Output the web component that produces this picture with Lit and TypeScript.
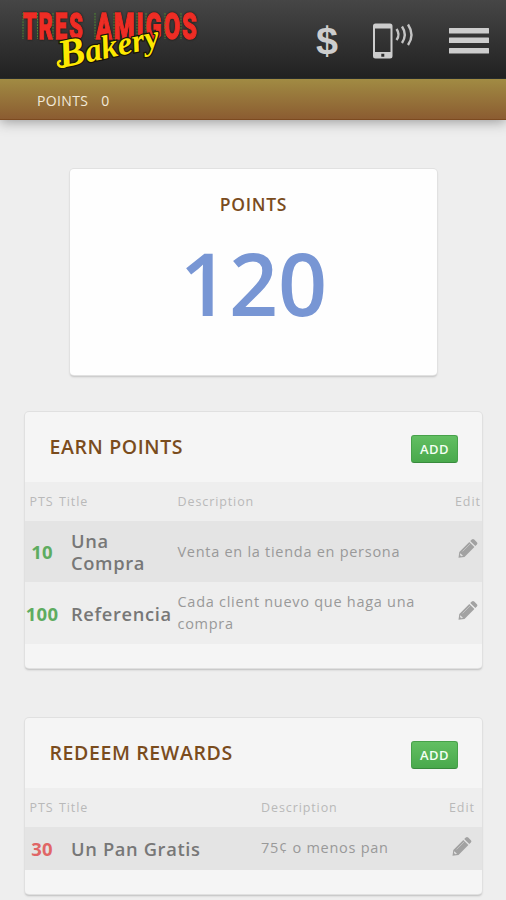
import { LitElement, html, svg, css } from "lit";
import { customElement, property } from "lit/decorators.js";

interface Entry {
  pts: string;
  title: string;
  description: string;
}

const pencil = html`<svg class="pencil" viewBox="0 0 20 20" width="20" height="20">
  <path fill="#a2a2a2" d="M13.8 1.5Q15 .3 16.200 1.500L18.900 4.200Q20 5.300 18.900 6.500L17.300 8.100L12.200 3.100ZM11.300 4L16.400 9.100L6.500 18.900L.5 19.800L1.300 13.900Z"/>
  <path fill="none" stroke="#c4c4c4" stroke-width=".9" d="M4.600 13.400L12.200 5.800"/>
  <path fill="#e0e0e0" d="M2.300 15.200L5 17.800L3.300 18.300L1.900 17Z"/>
</svg>`;

@customElement("points-panel")
export class PointsPanel extends LitElement {
  @property() heading = "";
  @property() kind = "earn";
  @property({ attribute: false }) entries: Entry[] = [];

  static styles = css`
    :host { display: block; }
    .panel {
      box-sizing: border-box;
      background: #f5f5f5;
      border-radius: 4px;
      box-shadow: 0 0 0 1px #e0e0e0, 0 2px 2px #bdbdbd;
      padding-bottom: 24px;
    }
    .head {
      height: 70px;
      box-sizing: border-box;
      display: flex;
      align-items: center;
      justify-content: space-between;
      padding: 4px 24px 0 24.500px;
    }
    h2 {
      margin: 0;
      font-size: 19.500px;
      font-weight: 600;
      letter-spacing: .62px;
      color: #7a4c1d;
      line-height: 24px;
      padding-bottom: 4px;
    }
    button {
      width: 47px;
      height: 28px;
      border: 1px solid #47a14a;
      border-bottom-color: #388a3c;
      border-radius: 3px;
      background: linear-gradient(#62bf62, #49a94c);
      color: #f4fff4;
      font: 600 13px "Open Sans", sans-serif;
      letter-spacing: .4px;
      padding: 0;
    }
    .row {
      display: grid;
      grid-template-columns: 46px 106.500px 1fr 27px;
      align-items: center;
      background: #eee;
      box-sizing: border-box;
    }
    .redeem .row { grid-template-columns: 46px 190px 1fr 33px; }
    .row.labels {
      height: 39px;
      padding-top: 1px;
      font-size: 12.500px;
      line-height: 18px;
      letter-spacing: .9px;
      color: #b9b9b9;
    }
    .labels .pts, .labels .title, .labels .desc {
      font-size: inherit;
      font-weight: 400;
      line-height: inherit;
      letter-spacing: inherit;
    }
    .labels .pts { padding-left: 4.500px; text-align: left; }
    .labels .title { margin-left: -12px; }
    .entry { height: 62px; }
    .entry.odd { height: 61px; background: #e4e4e4; }
    .redeem .entry { height: 43px; }
    .pts {
      width: 34px;
      text-align: center;
      font-size: 18.500px;
      font-weight: 700;
      color: #5eac60;
    }
    .entry .pts { letter-spacing: .2px; }
    .redeem .pts { color: #e06666; }
    .title {
      font-size: 18.300px;
      font-weight: 600;
      line-height: 22px;
      letter-spacing: .65px;
      color: #777;
      padding-right: 5px;
    }
    .earn .entry .title { padding-top: 1.500px; }
    .desc {
      font-size: 14.500px;
      line-height: 22px;
      letter-spacing: .72px;
      color: #999;
    }
    .panel .labels .pts, .panel .labels .title, .panel .labels .desc { color: inherit; }
    .redeem .entry .desc { padding-bottom: 2px; }
    .earn .entry .desc { padding-right: 10px; }
    .edit { white-space: nowrap; }
    .pencil { display: block; margin: -7px 0 0 3px; }
    .redeem .pencil { margin-top: -6px; }
  `;

  render() {
    return html`<section class="panel ${this.kind}">
      <div class="head"><h2>${this.heading}</h2><button>ADD</button></div>
      <div class="row labels">
        <span class="pts">PTS</span><span class="title">Title</span>
        <span class="desc">Description</span><span class="edit">Edit</span>
      </div>
      ${this.entries.map(
        (e, i) => html`<div class="row entry ${i % 2 ? "" : "odd"}">
          <span class="pts">${e.pts}</span><span class="title">${e.title}</span>
          <span class="desc">${e.description}</span><span class="edit">${pencil}</span>
        </div>`
      )}
    </section>`;
  }
}

@customElement("app-root")
export class AppRoot extends LitElement {
  static styles = css`
    :host {
      display: block;
      height: 900px;
      overflow: hidden;
      background: #eee;
      font-family: "Open Sans", sans-serif;
    }
    .top {
      position: relative;
      height: 79px;
      box-sizing: border-box;
      display: flex;
      background: linear-gradient(#464646, #212121);
      border-bottom: 1px solid #262c2c;
    }
    .logo { flex: 1; }
    .logo svg, .actions svg { display: block; }
    .red {
      font: 900 36px "Roboto", sans-serif;
      letter-spacing: 3px;
      fill: #ee2d25;
      stroke: #ee2d25;
      stroke-width: 1.300px;
      filter: drop-shadow(0 0 1px #15100c);
    }
    .script {
      font: italic 700 33px "Liberation Serif", serif;
      fill: #fde800;
      stroke: #181408;
      stroke-width: 2.500px;
      paint-order: stroke;
    }
    .initial { font-size: 40px; }
    .dollar { font: 700 39px "Liberation Sans", sans-serif; fill: #cdcdcd; }
    .bar {
      height: 41px;
      box-sizing: border-box;
      display: flex;
      align-items: center;
      gap: 13px;
      padding: 3px 0 0 37px;
      background: linear-gradient(#a18b43, #8b5c31);
      border-bottom: 1px solid #7c4a20;
      box-shadow: 0 2px 12px #999;
      color: #f2e9d9;
      font-size: 14px;
      letter-spacing: .35px;
    }
    main {
      display: flex;
      flex-direction: column;
      padding: 49px 24px 0 25px;
    }
    .score {
      margin: 0 45px 37px;
      height: 206px;
      box-sizing: border-box;
      border-radius: 4px;
      background: #fefefe;
      box-shadow: 0 0 0 1px #e1e1e1, 0 2px 2px #c2c2c2;
      text-align: center;
      padding-top: 23px;
    }
    .caption {
      font-size: 17.500px;
      font-weight: 600;
      line-height: 24px;
      letter-spacing: .7px;
      color: #7a4c1d;
    }
    .value {
      font-size: 86px;
      font-weight: 600;
      line-height: 118px;
      margin-top: 8px;
      color: #7896d4;
    }
    .second { margin-top: 50px; }
  `;

  private earn: Entry[] = [
    { pts: "10", title: "Una Compra", description: "Venta en la tienda en persona" },
    { pts: "100", title: "Referencia", description: "Cada client nuevo que haga una compra" },
  ];
  private redeem: Entry[] = [{ pts: "30", title: "Un Pan Gratis", description: "75¢ o menos pan" }];

  private bars = [28, 37.5, 48];
  private stripes = [23, 37.5, 53, 95, 114, 137, 146, 165, 181];

  render() {
    return html`
      <header class="top">
        <div class="logo">
          <svg width="220" height="78" viewBox="0 0 220 78">
            <text class="red" x="23" y="39" textLength="62" lengthAdjust="spacingAndGlyphs">TRES</text>
            <text class="red" x="96" y="39" textLength="103" lengthAdjust="spacingAndGlyphs">AMIGOS</text>
            ${this.stripes.map((x) => svg`<path d="M${x} 13V39" stroke="#4f8a32" stroke-width="1" stroke-dasharray="1.8 1"/>`)}
            <text class="script" transform="translate(61 68) rotate(-12)" textLength="102" lengthAdjust="spacingAndGlyphs"><tspan class="initial">B</tspan>akery</text>
            <path d="M60 61q-3 1-1.500 4q2 3 7 1" fill="none" stroke="#fde800" stroke-width="2.500" stroke-linecap="round"/>
          </svg>
        </div>
        <div class="actions">
          <svg width="206" height="78" viewBox="0 0 206 78">
            <text class="dollar" x="16" y="54" textLength="22" lengthAdjust="spacingAndGlyphs">$</text>
            <path fill="#cdcdcd" fill-rule="evenodd" d="M75.500 23.500h14.500a2.500 2.500 0 0 1 2.500 2.500v30a2.500 2.500 0 0 1-2.500 2.500H75.500a2.500 2.500 0 0 1-2.500-2.500v-30a2.500 2.500 0 0 1 2.500-2.500ZM75 28.500v23.500h15.500v-23.500ZM81.300 53.700v3h3v-3Z"/>
            <g fill="none" stroke="#c4c4c4" stroke-width="2.400">
              <path d="M96.500 29q4 5.500 0 11"/><path d="M102 26.500q5.500 8 0 16.500"/><path d="M108 24.500q7 10.500 0 20.500"/>
            </g>
            ${this.bars.map((y) => svg`<rect x="149" y=${y} width="40" height="5.500" rx=".5" fill="#cdcdcd"/>`)}
          </svg>
        </div>
      </header>
      <div class="bar"><span>POINTS</span><span>0</span></div>
      <main>
        <section class="score">
          <div class="caption">POINTS</div>
          <div class="value">120</div>
        </section>
        <points-panel heading="EARN POINTS" kind="earn" .entries=${this.earn}></points-panel>
        <points-panel class="second" heading="REDEEM REWARDS" kind="redeem" .entries=${this.redeem}></points-panel>
      </main>
    `;
  }
}
